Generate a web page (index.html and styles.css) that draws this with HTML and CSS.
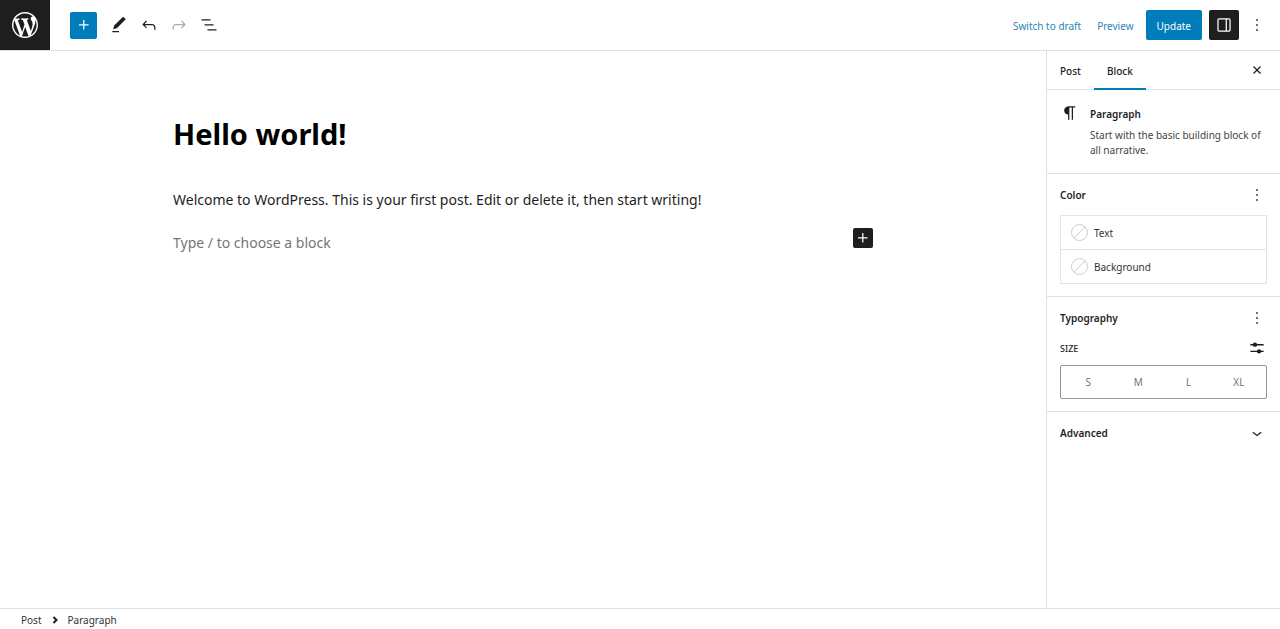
FILE: index.html
```html
<!DOCTYPE html>
<html lang="en">
<head>
  <meta charset="UTF-8">
  <meta name="viewport" content="width=device-width, initial-scale=1">
  <title>Edit Post</title>
  <link rel="stylesheet" href="styles.css">
</head>
<body>
  <header class="topbar">
    <a class="logo" href="#" aria-label="View Posts">
      <svg viewBox="0 0 20 20"><path d="M20 10c0-5.51-4.49-10-10-10C4.48 0 0 4.49 0 10c0 5.52 4.48 10 10 10 5.51 0 10-4.48 10-10zM7.78 15.37L4.37 6.22c.55-.02 1.17-.08 1.17-.08.5-.06.44-1.13-.06-1.11 0 0-1.45.11-2.37.11-.18 0-.37 0-.58-.01C4.12 2.69 6.87 1.11 10 1.11c2.33 0 4.45.87 6.05 2.34-.68-.11-1.65.39-1.65 1.58 0 .74.45 1.36.9 2.1.35.61.55 1.36.55 2.46 0 1.49-1.4 5-1.4 5l-3.03-8.37c.54-.02.82-.17.82-.17.5-.05.44-1.25-.06-1.22 0 0-1.44.12-2.38.12-.87 0-2.33-.12-2.33-.12-.5-.03-.56 1.2-.06 1.22l.92.08 1.26 3.41zM17.41 10c.24-.64.74-1.87.43-4.25.7 1.29 1.05 2.71 1.05 4.25 0 3.29-1.73 6.24-4.4 7.78.97-2.59 1.94-5.2 2.92-7.78zM6.1 18.09C3.12 16.65 1.11 13.53 1.11 10c0-1.3.23-2.48.72-3.59C3.25 10.3 4.67 14.2 6.1 18.09zm4.03-6.63l2.58 6.98c-.86.29-1.76.45-2.71.45-.79 0-1.57-.11-2.29-.33.81-2.38 1.62-4.74 2.42-7.1z"/></svg>
    </a>
    <div class="tools">
      <button class="inserter" aria-label="Toggle block inserter">
        <svg viewBox="0 0 24 24"><path d="M11 12.5V17.5H12.5V12.5H17.5V11H12.5V6H11V11H6V12.5H11Z"/></svg>
      </button>
      <button class="tool" aria-label="Tools">
        <svg viewBox="0 0 24 24"><path d="M20.1 5.1L16.9 2 6.2 12.7l-1.3 4.4 4.5-1.3L20.1 5.1zM4 20.8h8v-1.5H4v1.5z"/></svg>
      </button>
      <button class="tool" aria-label="Undo">
        <svg viewBox="0 0 24 24"><path d="M18.3 11.7c-.6-.6-1.4-.9-2.3-.9H6.7l2.9-3.3-1.1-1-4.5 5L8.5 16l1-1-2.7-2.7H16c.5 0 .9.2 1.3.5 1 1 1 3.4 1 4.5v.3h1.5v-.2c0-1.5 0-4.3-1.5-5.7z"/></svg>
      </button>
      <button class="tool" aria-label="Redo" disabled>
        <svg viewBox="0 0 24 24"><path d="M15.6 6.5l-1.1 1 2.9 3.3H8c-.9 0-1.7.3-2.3.9-1.4 1.5-1.4 4.2-1.4 5.6v.2h1.5v-.3c0-1.1 0-3.5 1-4.5.3-.3.7-.5 1.3-.5h9.2L14.5 15l1.1 1.1 4.6-4.6-4.6-5z"/></svg>
      </button>
      <button class="tool" aria-label="List View">
        <svg viewBox="0 0 24 24"><path d="M13.8 5.2H3v1.5h10.8V5.2zm-3.6 12v1.5H21v-1.5H10.2zm7.2-6H6.6v1.5h10.8v-1.5z"/></svg>
      </button>
    </div>
    <div class="settings">
      <div class="links">
        <button>Switch to draft</button>
        <button>Preview</button>
      </div>
      <button class="update">Update</button>
      <button class="panel-toggle" aria-label="Settings">
        <svg viewBox="0 0 24 24"><path d="M18 4H6c-1.1 0-2 .9-2 2v12c0 1.1.9 2 2 2h12c1.1 0 2-.9 2-2V6c0-1.1-.9-2-2-2zm-4 14.5H6c-.3 0-.5-.2-.5-.5V6c0-.3.2-.5.5-.5h8v13zm4.5-.5c0 .3-.2.5-.5.5h-2.5v-13H18c.3 0 .5.2.5.5v12z"/></svg>
      </button>
      <button class="icon-btn" aria-label="Options">
        <svg viewBox="0 0 24 24"><path d="M13 19h-2v-2h2v2zm0-6h-2v-2h2v2zm0-6h-2V5h2v2z"/></svg>
      </button>
    </div>
  </header>

  <div class="body">
    <main class="editor">
      <div class="content">
        <h1 class="post-title" contenteditable="true">Hello world!</h1>
        <p class="paragraph" contenteditable="true">Welcome to WordPress. This is your first post. Edit or delete it, then start writing!</p>
        <div class="new-block">
          <input class="block-input" type="text" placeholder="Type / to choose a block" aria-label="Empty block">
          <button class="add-block" aria-label="Add block">
            <svg viewBox="0 0 24 24"><path d="M11 12.5V17.5H12.5V12.5H17.5V11H12.5V6H11V11H6V12.5H11Z"/></svg>
          </button>
        </div>
      </div>
    </main>

    <aside class="sidebar">
      <div class="tabs">
        <button class="tab">Post</button>
        <button class="tab active">Block</button>
        <button class="icon-btn close" aria-label="Close settings">
          <svg viewBox="0 0 24 24"><path d="M12 13.06l3.712 3.713 1.061-1.06L13.061 12l3.712-3.712-1.06-1.06L12 10.938 8.288 7.227l-1.061 1.06L10.939 12l-3.712 3.712 1.06 1.061L12 13.061z"/></svg>
        </button>
      </div>

      <section class="block-card">
        <svg viewBox="0 0 24 24"><path d="M18.3 4H9.9v-.1l-.9.2c-2.3.4-4 2.4-4 4.8s1.7 4.4 4 4.8l.7.1V20h1.5V5.5h2.9V20h1.5V5.5h2.7V4z"/></svg>
        <div>
          <h2>Paragraph</h2>
          <p>Start with the basic building block of all narrative.</p>
        </div>
      </section>

      <section class="panel">
        <div class="panel-head">
          <h2>Color</h2>
          <button class="icon-btn" aria-label="Color options">
            <svg viewBox="0 0 24 24"><path d="M13 19h-2v-2h2v2zm0-6h-2v-2h2v2zm0-6h-2V5h2v2z"/></svg>
          </button>
        </div>
        <div class="colors">
          <button class="color-row">
            <svg viewBox="0 0 17 17"><circle cx="8.5" cy="8.5" r="8"/><path d="M3 14L14 3"/></svg>
            Text
          </button>
          <button class="color-row">
            <svg viewBox="0 0 17 17"><circle cx="8.5" cy="8.5" r="8"/><path d="M3 14L14 3"/></svg>
            Background
          </button>
        </div>
      </section>

      <section class="panel">
        <div class="panel-head">
          <h2>Typography</h2>
          <button class="icon-btn" aria-label="Typography options">
            <svg viewBox="0 0 24 24"><path d="M13 19h-2v-2h2v2zm0-6h-2v-2h2v2zm0-6h-2V5h2v2z"/></svg>
          </button>
        </div>
        <div class="size-head">
          <h3 id="size-label">Size</h3>
          <button class="icon-btn" aria-label="Set custom size">
            <svg viewBox="0 0 24 24"><path d="M4 7.2h16v1.7H4zM4 15.2h16v1.7H4z"/><circle cx="9.5" cy="8" r="2.6"/><circle cx="14.5" cy="16" r="2.6"/></svg>
          </button>
        </div>
        <div class="sizes" role="radiogroup" aria-labelledby="size-label">
          <label><input type="radio" name="size" value="s">S</label>
          <label><input type="radio" name="size" value="m">M</label>
          <label><input type="radio" name="size" value="l">L</label>
          <label><input type="radio" name="size" value="xl">XL</label>
        </div>
      </section>

      <button class="advanced">
        Advanced
        <svg viewBox="0 0 24 24"><path d="M17.5 11.6L12 16l-5.5-4.4.9-1.2L12 14l4.5-3.6 1 1.2z"/></svg>
      </button>
    </aside>
  </div>

  <footer class="breadcrumb">
    <button>Post</button>
    <svg viewBox="0 0 10 10"><path d="M3.500 2L6.500 5L3.500 8"/></svg>
    <button>Paragraph</button>
  </footer>
</body>
</html>
```

FILE: styles.css
```css
* {
  box-sizing: border-box;
}
body {
  margin: 0;
  min-height: 100vh;
  display: flex;
  flex-direction: column;
  font-family: "Noto Sans", "Open Sans", sans-serif;
  font-size: 10px;
  color: #1e1e1e;
  background: #fff;
}
button {
  margin: 0;
  padding: 0;
  border: none;
  background: none;
  font: inherit;
  color: inherit;
  cursor: pointer;
}
svg {
  display: block;
  width: 20px;
  height: 20px;
  fill: currentColor;
  flex-shrink: 0;
}
h1, h2, h3, p {
  margin: 0;
}

/* top bar */
.topbar {
  display: flex;
  align-items: center;
  border-bottom: 1px solid #e0e0e0;
}
.logo {
  display: flex;
  align-items: center;
  justify-content: center;
  width: 50px;
  height: 50px;
  background: #1e1e1e;
  color: #fff;
}
.logo svg {
  width: 26px;
  height: 26px;
}
.tools {
  display: flex;
  align-items: center;
  margin-left: 20px;
}
.tool {
  display: flex;
  align-items: center;
  justify-content: center;
  width: 30px;
  height: 30px;
}
.tool:disabled {
  color: #aaa;
}
.inserter {
  display: flex;
  align-items: center;
  justify-content: center;
  width: 27px;
  height: 27px;
  margin-right: 7px;
  border-radius: 2px;
  background: #007cba;
  color: #fff;
}
.settings {
  display: flex;
  align-items: center;
  margin-left: auto;
  padding-right: 13px;
}
.links {
  display: flex;
  gap: 16px;
  margin-right: 12px;
  padding-top: 2px;
  color: #2b86b5;
}
.update {
  height: 30px;
  padding: 1px 11px 0;
  border-radius: 2px;
  background: #007cba;
  color: #fff;
}
.panel-toggle {
  display: flex;
  align-items: center;
  justify-content: center;
  width: 30px;
  height: 30px;
  margin: 0 8px 0 7px;
  border-radius: 2px;
  background: #1e1e1e;
  color: #fff;
}

/* editor */
.body {
  flex: 1;
  display: flex;
}
.editor {
  flex: 1;
  padding: 62px 24px;
}
.content {
  max-width: 700px;
  margin: 0 auto;
}
.post-title {
  margin-bottom: 31px;
  font-size: 29px;
  line-height: 42px;
  color: #000;
}
.paragraph {
  margin-bottom: 14px;
  font-size: 14px;
  line-height: 28px;
}
.new-block {
  display: flex;
  align-items: flex-start;
}
.block-input {
  flex: 1;
  height: 28px;
  padding: 0;
  border: none;
  outline: none;
  background: none;
  font: inherit;
  font-size: 14px;
}
.block-input::placeholder {
  color: #757575;
}
.add-block {
  width: 20px;
  height: 20px;
  border-radius: 2px;
  background: #1e1e1e;
  color: #fff;
}

/* sidebar */
.sidebar {
  width: 234px;
  border-left: 1px solid #e0e0e0;
}
.sidebar h2 {
  font-size: 10px;
  line-height: 16px;
  font-weight: 600;
}
.icon-btn {
  width: 20px;
  height: 20px;
}
.tabs {
  display: flex;
  align-items: center;
  height: 39px;
  padding-right: 13px;
  border-bottom: 1px solid #e0e0e0;
}
.tab {
  height: 39px;
  padding: 4px 13px 0;
  border-bottom: 2px solid transparent;
  font-weight: 500;
}
.tab.active {
  border-color: #007cba;
}
.close {
  margin-left: auto;
}
.block-card {
  display: flex;
  gap: 10px;
  padding: 16px 13px 15px;
  border-bottom: 1px solid #e0e0e0;
}
.block-card svg {
  margin-top: -3px;
}
.block-card p {
  margin-top: 6px;
  line-height: 15px;
  color: #444;
}
.panel {
  padding: 11px 13px 12px;
  border-bottom: 1px solid #e0e0e0;
}
.panel-head, .size-head {
  display: flex;
  align-items: center;
  justify-content: space-between;
}
.panel-head {
  margin-bottom: 10px;
}
.size-head {
  margin-bottom: 7px;
}
.size-head h3 {
  font-size: 9px;
  font-weight: 500;
  text-transform: uppercase;
}
.colors {
  border: 1px solid #e4e4e4;
}
.color-row {
  display: flex;
  align-items: center;
  gap: 6px;
  width: 100%;
  height: 33px;
  padding: 0 10px;
  color: #333;
}
.color-row + .color-row {
  height: 34px;
  border-top: 1px solid #e4e4e4;
}
.color-row svg {
  width: 17px;
  height: 17px;
  fill: none;
  stroke: #ccc;
}
.sizes {
  display: grid;
  grid-template-columns: repeat(4, 1fr);
  height: 34px;
  padding: 0 2px;
  border: 1px solid #949494;
  border-radius: 2px;
}
.sizes label {
  display: flex;
  align-items: center;
  justify-content: center;
  color: #757575;
  cursor: pointer;
}
.sizes input {
  appearance: none;
  width: 0;
  height: 0;
  margin: 0;
}
.advanced {
  display: flex;
  align-items: center;
  justify-content: space-between;
  width: 100%;
  height: 42px;
  padding: 0 13px;
  font-weight: 600;
}

/* breadcrumb */
.breadcrumb {
  display: flex;
  align-items: center;
  gap: 8px;
  height: 21px;
  padding: 2px 21px 0;
  border-top: 1px solid #e0e0e0;
  color: #333;
}
.breadcrumb svg {
  width: 10px;
  height: 10px;
  fill: none;
  stroke: #1e1e1e;
  stroke-width: 2;
}
```
